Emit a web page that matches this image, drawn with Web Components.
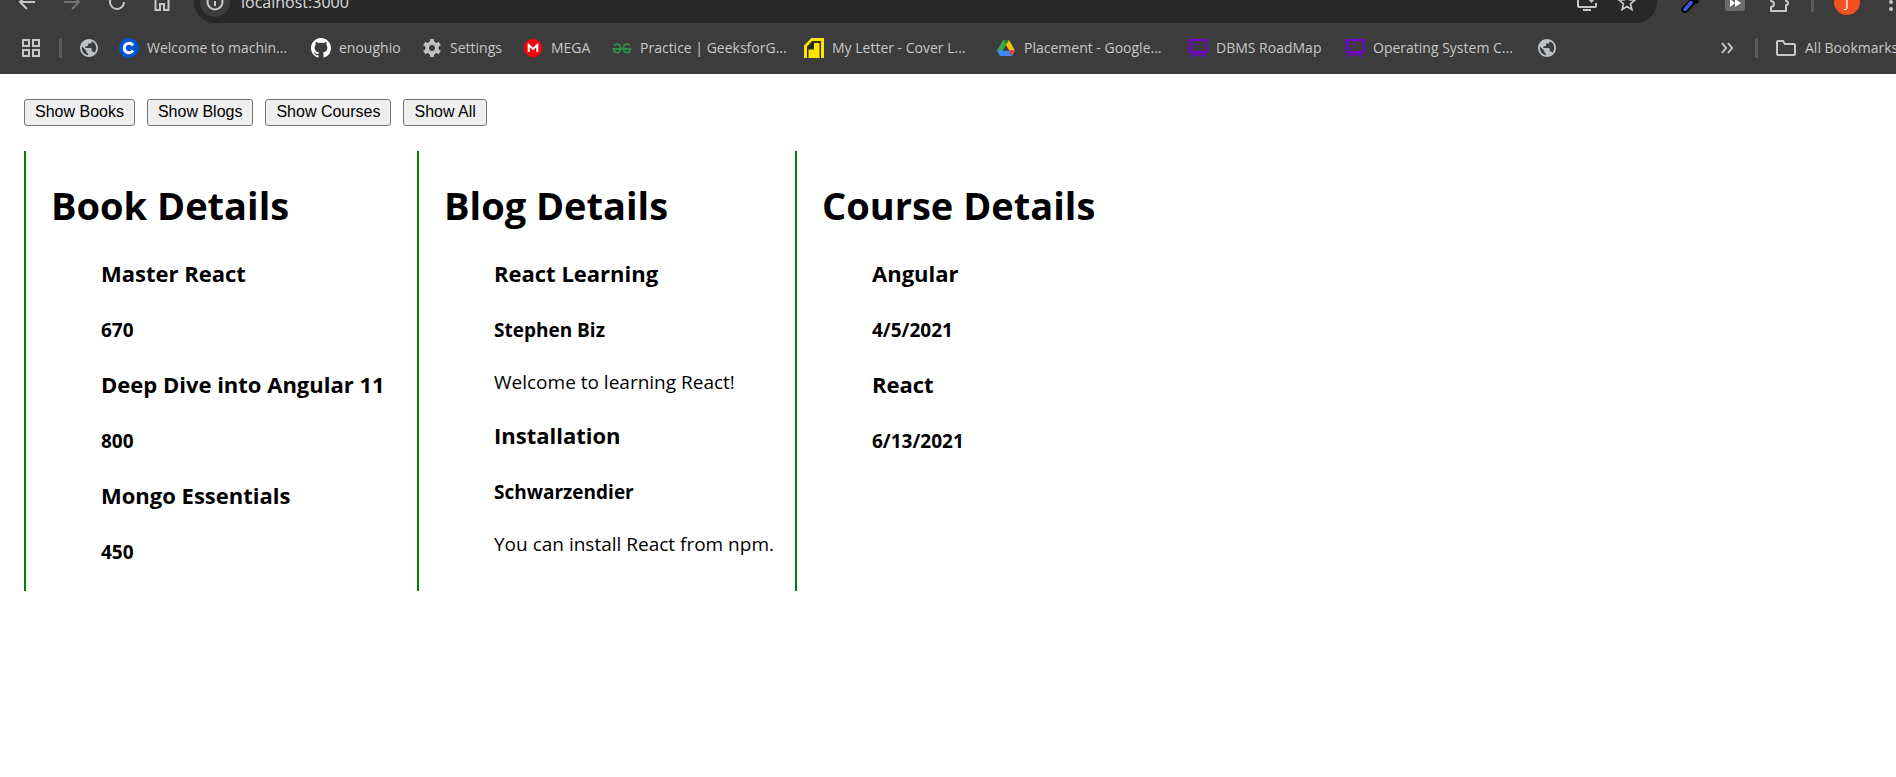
<!DOCTYPE html>
<html lang="en">
<head>
<meta charset="utf-8">
<title>Blogger App</title>
<style>
  body { margin: 0; background: #fff; color: #000; font-family: "Open Sans", "Noto Sans", sans-serif; }
</style>
</head>
<body>
<browser-bar></browser-bar>
<blogger-app></blogger-app>

<script>
const svg = (w, h, body, extra = '') =>
  `<svg width="${w}" height="${h}" viewBox="0 0 ${w} ${h}" fill="none" aria-hidden="true" ${extra}>${body}</svg>`;

const line = 'stroke="#c7c7c7" stroke-width="2"';
const ICONS = {
  back: svg(20, 20, `<path d="M18 10H3M10 3l-7 7 7 7" ${line}/>`),
  forward: svg(20, 20, `<path d="M2 10h15M10 3l7 7-7 7" stroke="#757575" stroke-width="2"/>`),
  reload: svg(20, 20, `<path d="M17 10a7 7 0 1 1-2-5M17 2v5h-5" ${line}/>`),
  home: svg(20, 20, `<path d="M3.500 18V7L10 2l6.500 5v11H12v-6H8v6z" ${line}/>`),
  info: svg(20, 20, `<circle cx="10" cy="10" r="7.500" ${line}/><path d="M10 9v5M10 6v2" ${line}/>`),
  install: svg(22, 20, `<path d="M12 3H3q-1 0-1 1v10q0 1 1 1h16q1 0 1-1v-3" ${line}/><path d="M7 17h8v2H7zM11 6h9l-4.500 5z" fill="#c7c7c7"/>`),
  star: svg(20, 20, `<path d="M10 2.500l2.200 5.300 5.600.4-4.300 3.700 1.400 5.600L10 14.500l-4.900 3 1.400-5.600L2.200 8.200l5.600-.4z" stroke="#c7c7c7" stroke-width="1.700"/>`),
  picker: svg(22, 22, `<path d="M5 18.500L15 8" stroke="#000" stroke-width="7" stroke-linecap="round"/><path d="M5 18.500l6-7" stroke="#3f5be0" stroke-width="3.500" stroke-linecap="round"/><path d="M10 5l8 7" stroke="#000" stroke-width="3"/>`),
  skip: svg(22, 22, `<rect x="1" y="1" width="20" height="19" rx="3" fill="#6c6c6c"/><path d="M6 8l5 4-5 4zM11 8l6 4-6 4z" fill="#fff"/>`),
  puzzle: svg(22, 22, `<path d="M3 5h4q0-3 3-3t3 3h5v5q2 0 2 2t-2 2v6H3v-4q3-.5 3-3t-3-3z" ${line} stroke-linejoin="round"/>`),
  dots: svg(6, 20, `<circle cx="3" cy="3" r="2" fill="#c7c7c7"/><circle cx="3" cy="10" r="2" fill="#c7c7c7"/><circle cx="3" cy="17" r="2" fill="#c7c7c7"/>`),
  apps: svg(20, 20, `<path d="M2 2h6v6H2zM12 2h6v6h-6zM2 12h6v6H2zM12 12h6v6h-6z" ${line}/>`),
  globe: svg(20, 20, `<path transform="translate(-.8 -.8) scale(.9)" fill="#bdc1c6" d="M12 2C6.480 2 2 6.480 2 12s4.480 10 10 10 10-4.480 10-10S17.520 2 12 2zm-1 17.930c-3.950-.49-7-3.850-7-7.930 0-.62.080-1.210.21-1.790L9 15v1c0 1.100.9 2 2 2v1.930zm6.900-2.540c-.26-.81-1-1.390-1.900-1.390h-1v-3c0-.55-.45-1-1-1H8v-2h2c.55 0 1-.45 1-1V7h2c1.100 0 2-.9 2-2v-.41c2.930 1.190 5 4.060 5 7.410 0 2.080-.8 3.970-2.100 5.390z"/>`),
  coursera: svg(20, 20, `<circle cx="10" cy="10" r="10" fill="#0056d2"/><path d="M14 7.300A4.800 4.800 0 1 0 14 12.700" stroke="#fff" stroke-width="3"/>`),
  github: svg(20, 20, `<path fill="#fff" transform="scale(1.25)" d="M8 0C3.580 0 0 3.580 0 8c0 3.540 2.290 6.530 5.470 7.590.4.070.55-.17.55-.38 0-.19-.01-.82-.01-1.490-2.010.37-2.530-.49-2.690-.94-.09-.23-.48-.94-.82-1.130-.28-.15-.68-.52-.01-.53.63-.01 1.080.58 1.230.82.72 1.210 1.870.87 2.330.66.070-.52.280-.87.510-1.070-1.780-.2-3.640-.89-3.640-3.950 0-.87.31-1.590.82-2.150-.08-.2-.36-1.020.08-2.120 0 0 .67-.21 2.200.82.64-.18 1.320-.27 2-.27s1.360.09 2 .27c1.530-1.040 2.200-.82 2.200-.82.44 1.100.16 1.920.08 2.120.51.56.82 1.270.82 2.150 0 3.070-1.870 3.750-3.650 3.950.29.25.54.73.54 1.480 0 1.070-.01 1.930-.01 2.200 0 .21.15.46.55.38A8.010 8.010 0 0 0 16 8c0-4.420-3.580-8-8-8z"/>`),
  gear: svg(20, 20, `<path d="M10 1v18M2.200 5.500l15.600 9M2.200 14.500l15.600-9" stroke="#bdc1c6" stroke-width="4"/><circle cx="10" cy="10" r="5" stroke="#bdc1c6" stroke-width="3.500"/><circle cx="10" cy="10" r="3" fill="#3c3c3c"/>`),
  mega: svg(20, 20, `<circle cx="10" cy="10" r="9.300" fill="#f0060d"/><path d="M5.700 14V7l4.300 4 4.300-4v7" stroke="#fff" stroke-width="2"/>`),
  geeks: svg(20, 20, `<path d="M2 7.500Q4 5.500 6.500 6.300 9 7.500 8.500 11 8 14.500 5 14.500 2 14.500 1.500 11H18.500Q18 14.500 15 14.500 12 14.500 11.500 11 11 7.500 13.500 6.300 16 5.500 18 7.500" stroke="#2f8d46" stroke-width="1.800"/>`),
  letter: svg(20, 20, `<path d="M1.500 20V8L8 1.500h10.500V20" stroke="#ffe500" stroke-width="3"/><path d="M3 20V9l5-6h9v17" fill="#332f16"/><path d="M4.500 20V11.500h5.500V5h5.500v15z" fill="#ffe500"/><path d="M5 10l4-5v5z" fill="#222"/>`),
  drive: svg(20, 20, `<path d="M7 2h6L4 17.500 1 12.500z" fill="#34a853"/><path d="M7 2h6l6 10.500h-6z" fill="#fbbc04"/><path d="M1 12.500h18l-3 5.500H4z" fill="#4285f4"/><path d="M13 12.500h6l-3 5.500z" fill="#ea4335"/><path d="M7 2h6l-3 5z" fill="#188038"/><path d="M10 7.500l3 5H7z" fill="#3c3c3c"/>`),
  board: svg(20, 20, `<path d="M1.500 2h17v12h-17z" stroke="#7300d1" stroke-width="2"/><path d="M4 6h2M8 6h2M4 10h2M5.500 15l-2 4M8.500 15v3M11.500 15v3M14.500 15l2 4" stroke="#7300d1" stroke-width="2"/>`),
  more: svg(14, 14, `<path d="M2 2l4 5-4 5M8 2l4 5-4 5" ${line}/>`),
  folder: svg(22, 18, `<path d="M2 15V3q0-1 1-1h5l2 3h9q1 0 1 1v9q0 1-1 1H3q-1 0-1-1z" ${line}/>`)
};

const define = (name, css, html, ready) => {
  const template = document.createElement('template');
  template.innerHTML = `<style>${css}</style>${html}`;
  customElements.define(name, class extends HTMLElement {
    connectedCallback() {
      if (this.shadowRoot) return;
      this.attachShadow({ mode: 'open' }).append(template.content.cloneNode(true));
      if (ready) ready(this, this.shadowRoot);
    }
  });
};

const drawIcon = (host, root) => {
  root.querySelector('.icon').innerHTML = ICONS[host.getAttribute('icon')] || '';
};

define('tool-button', `
  :host { display: block; flex: none; width: 24px; }
  :host([narrow]) { width: 10px; }
  button { display: flex; width: 100%; height: 24px; padding: 0; border: 0; background: none;
    align-items: center; justify-content: center; }
  .icon { display: flex; }
`, `<button type="button"><span class="icon"></span></button>`, (host, root) => {
  drawIcon(host, root);
  root.querySelector('button').setAttribute('aria-label', host.getAttribute('label'));
});

define('bookmark-link', `
  :host { display: block; flex: none; width: var(--w, 192px); }
  a { display: flex; align-items: center; gap: 8px; color: #c7c7c7; text-decoration: none;
    font-size: 14px; line-height: 20px; white-space: nowrap; }
  .icon { display: flex; flex: none; }
`, `<a href="#"><span class="icon"></span><slot></slot></a>`, (host, root) => {
  drawIcon(host, root);
  const label = host.getAttribute('label');
  if (label) root.querySelector('a').setAttribute('aria-label', label);
});

define('bar-rule', `
  :host { display: block; flex: none; width: 3px; height: 20px; border-radius: 2px; background: #5c5c5c; }
`, '');

define('browser-bar', `
  :host { display: block; background: #3c3c3c; overflow: hidden; }
  .tools { display: flex; align-items: center; height: 42px; margin-top: -19px; padding-left: 15px; }
  .nav { display: flex; gap: 21px; }
  .address { display: flex; flex: 1; align-items: center; height: 42px; margin-left: 20px;
    padding: 0 18px 0 3px; border-radius: 21px; background: #282828; box-sizing: border-box; }
  .site { display: flex; align-items: center; justify-content: center; width: 36px; height: 30px;
    border-radius: 15px; }
  .site tool-button { border-radius: 15px; width: 30px; background: #3c3c3c; padding: 3px 0; }
  input { flex: 1; min-width: 0; margin-left: 8px; padding: 0; border: 0; outline: 0;
    background: none; color: #dcdcdc; font: 16px/22px "Open Sans", sans-serif; }
  .page { display: flex; gap: 16px; }
  .extras { display: flex; align-items: center; margin-left: 22px; gap: 20px; }
  .avatar { width: 26px; height: 26px; margin-right: 6px; padding: 0; border: 0; border-radius: 50%;
    background: #f4511e; color: #fff; font: 14px/26px "Open Sans", sans-serif; }
  .marks { display: flex; align-items: center; height: 51px; padding: 0 0 2px 19px; box-sizing: border-box; }
  .marks bar-rule { margin: 0 17px 0 16px; }
  .end { display: flex; align-items: center; margin-left: auto; }
`, `
  <div class="tools">
    <nav class="nav" aria-label="Navigation">
      <tool-button icon="back" label="Back"></tool-button>
      <tool-button icon="forward" label="Forward"></tool-button>
      <tool-button icon="reload" label="Reload"></tool-button>
      <tool-button icon="home" label="Home"></tool-button>
    </nav>
    <div class="address">
      <span class="site"><tool-button icon="info" label="Site information"></tool-button></span>
      <input type="text" value="localhost:3000" aria-label="Address">
      <span class="page">
        <tool-button icon="install" label="Install"></tool-button>
        <tool-button icon="star" label="Bookmark this page"></tool-button>
      </span>
    </div>
    <div class="extras">
      <tool-button icon="picker" label="Color picker"></tool-button>
      <tool-button icon="skip" label="Skip"></tool-button>
      <tool-button icon="puzzle" label="Extensions"></tool-button>
      <bar-rule></bar-rule>
      <button class="avatar" type="button">J</button>
      <tool-button narrow icon="dots" label="Menu"></tool-button>
    </div>
  </div>
  <div class="marks">
    <tool-button icon="apps" label="Apps"></tool-button>
    <bar-rule></bar-rule>
    <bookmark-link icon="globe" label="Site" style="--w:40px"></bookmark-link>
    <bookmark-link icon="coursera">Welcome to machin...</bookmark-link>
    <bookmark-link icon="github" style="--w:111px">enoughio</bookmark-link>
    <bookmark-link icon="gear" style="--w:101px">Settings</bookmark-link>
    <bookmark-link icon="mega" style="--w:89px">MEGA</bookmark-link>
    <bookmark-link icon="geeks">Practice | GeeksforG...</bookmark-link>
    <bookmark-link icon="letter">My Letter - Cover L...</bookmark-link>
    <bookmark-link icon="drive">Placement - Google...</bookmark-link>
    <bookmark-link icon="board" style="--w:157px">DBMS RoadMap</bookmark-link>
    <bookmark-link icon="board">Operating System C...</bookmark-link>
    <bookmark-link icon="globe" label="Site" style="--w:20px"></bookmark-link>
    <div class="end">
      <tool-button icon="more" label="More bookmarks"></tool-button>
      <bar-rule></bar-rule>
      <bookmark-link icon="folder" style="--w:121px">All Bookmarks</bookmark-link>
    </div>
  </div>
`);

define('detail-entry', `
  :host { display: block; }
  h3, h4, p { white-space: nowrap; }
  h3 { margin: 24px 0; font-size: 22px; line-height: 30px; }
  h4 { margin: 29px 0 25px; font-size: 19px; line-height: 27px; }
  p { margin: 24px 0; font-size: 19px; line-height: 27px; }
  [hidden] { display: none; }
`, `<h3></h3><h4></h4><p></p>`, (host, root) => {
  root.querySelector('h3').textContent = host.getAttribute('heading');
  root.querySelector('h4').textContent = host.getAttribute('detail');
  const text = root.querySelector('p');
  text.textContent = host.getAttribute('text') || '';
  text.hidden = !text.textContent;
});

define('detail-column', `
  :host { display: block; box-sizing: border-box; padding: 0 25px; border-left: 2px solid green; }
  :host([hidden]) { display: none; }
  h1 { margin: 27px 0 26px; font-size: 38px; line-height: 54px; white-space: nowrap; }
  .list { padding-left: 50px; }
`, `<h1></h1><div class="list"><slot></slot></div>`, (host, root) => {
  root.querySelector('h1').textContent = host.getAttribute('heading');
});

define('blogger-app', `
  :host { display: block; padding: 25px 24px; }
  .actions { display: flex; gap: 12px; }
  .actions button { height: 27px; padding: 0 10px 2px; border: 1px solid #767676; border-radius: 3px;
    background: #efefef; color: #000; font: 16px/22px "Liberation Sans", Arial, sans-serif; }
  .columns { display: grid; grid-template-columns: 393px 378px auto; justify-content: start;
    margin-top: 25px; }
`, `
  <div class="actions">
    <button type="button" data-show="books">Show Books</button>
    <button type="button" data-show="blogs">Show Blogs</button>
    <button type="button" data-show="courses">Show Courses</button>
    <button type="button" data-show="all">Show All</button>
  </div>
  <main class="columns">
    <detail-column id="books" heading="Book Details">
      <detail-entry heading="Master React" detail="670"></detail-entry>
      <detail-entry heading="Deep Dive into Angular 11" detail="800"></detail-entry>
      <detail-entry heading="Mongo Essentials" detail="450"></detail-entry>
    </detail-column>
    <detail-column id="blogs" heading="Blog Details">
      <detail-entry heading="React Learning" detail="Stephen Biz" text="Welcome to learning React!"></detail-entry>
      <detail-entry heading="Installation" detail="Schwarzendier" text="You can install React from npm."></detail-entry>
    </detail-column>
    <detail-column id="courses" heading="Course Details">
      <detail-entry heading="Angular" detail="4/5/2021"></detail-entry>
      <detail-entry heading="React" detail="6/13/2021"></detail-entry>
    </detail-column>
  </main>
`, (host, root) => {
  root.querySelector('.actions').addEventListener('click', (event) => {
    const show = event.target.dataset.show;
    if (!show) return;
    root.querySelectorAll('detail-column').forEach((column) => {
      column.hidden = show !== 'all' && column.id !== show;
    });
  });
});
</script>
</body>
</html>
